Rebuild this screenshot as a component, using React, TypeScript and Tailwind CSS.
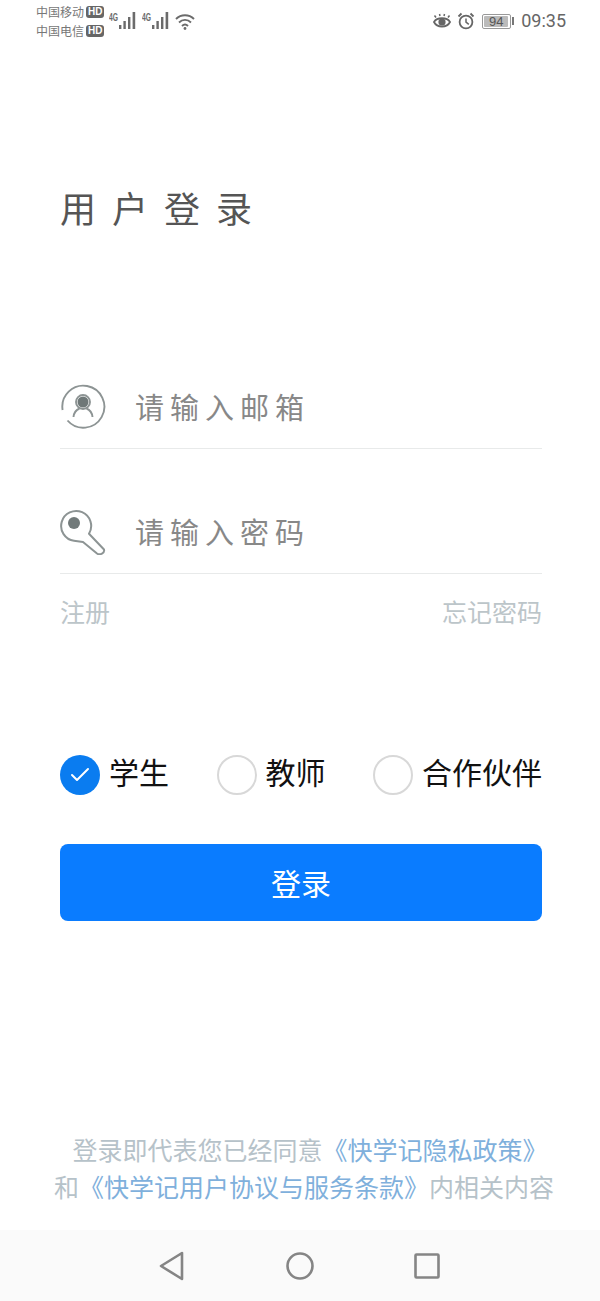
import { Check } from "lucide-react";

const FONT = { fontFamily: '"Noto Sans CJK SC", "Liberation Sans", sans-serif' };

const Signal = () => (
    <svg width="29" height="18" viewBox="0 0 29 18" fill="#6b6b6b">
        <text x="0" y="9" fontSize="10" fontWeight="700" fontFamily="Liberation Sans" textLength="9" lengthAdjust="spacingAndGlyphs">4G</text>
        <rect x="10" y="13" width="2.4" height="4" />
        <rect x="14.4" y="9" width="2.4" height="8" />
        <rect x="19" y="5" width="2.4" height="12" />
        <rect x="23.6" y="0" width="2.6" height="17" />
    </svg>
);

const Carrier = ({ name }: { name: string }) => (
    <div className="flex items-center gap-[2px] h-[19px]">
        <span className="text-[12px] text-[#777] leading-none">{name}</span>
        <span className="bg-[#666] text-white rounded-[3px] text-[10px] font-bold leading-none px-[2px] py-[1px]" style={{ fontFamily: "Liberation Sans" }}>HD</span>
    </div>
);

const StatusBar = () => (
    <div className="flex justify-between items-start pl-[36px] pr-[34px] pt-[2px] h-[40px]">
        <div className="flex items-start">
            <div className="flex flex-col">
                <Carrier name="中国移动" />
                <Carrier name="中国电信" />
            </div>
            <div className="flex gap-[4px] ml-[5px] mt-[10px]">
                <Signal />
                <Signal />
            </div>
            <svg width="20" height="18" viewBox="0 0 20 18" fill="none" stroke="#6b6b6b" strokeWidth="1.9" className="ml-[4px] mt-[11px]">
                <path d="M1 6 C6 1 14 1 19 6" />
                <path d="M4 9.5 C7.5 6 12.5 6 16 9.5" />
                <path d="M7 13 C9 11 11 11 13 13" />
                <circle cx="10" cy="15.5" r="1.4" fill="#6b6b6b" stroke="none" />
            </svg>
        </div>
        <div className="flex items-center mt-[10px] h-[18px]">
            <svg width="20" height="18" viewBox="0 0 20 18" fill="none" stroke="#666" strokeWidth="1.8">
                <path d="M2 10 C5 5 15 5 18 10 C15 16 5 16 2 10 Z" />
                <circle cx="10" cy="10" r="3.6" fill="#666" stroke="none" />
                <path d="M4 5.5 L2.5 3.5 M8 4 L7.5 2 M12 4 L12.5 2 M16 5.5 L17.5 3.5" strokeWidth="1.5" />
            </svg>
            <svg width="18" height="18" viewBox="0 0 18 18" fill="none" stroke="#666" strokeWidth="1.8" className="ml-[5px]">
                <circle cx="9" cy="10" r="6.4" />
                <path d="M9 6.5 V10.2 L11.8 12.4" strokeWidth="1.5" />
                <path d="M1.5 4.5 L4.5 1.5 M13.5 1.5 L16.5 4.5" />
            </svg>
            <div className="flex items-center ml-[7px]">
                <div className="w-[29px] h-[15px] border border-[#999] rounded-[2px] p-[1px]">
                    <div className="w-[24px] h-full bg-[#bbb] rounded-[1px] flex items-center justify-center text-[13px] leading-none text-[#555]" style={{ fontFamily: "Liberation Sans" }}>94</div>
                </div>
                <div className="w-[2px] h-[8px] bg-[#777] ml-[1px]" />
            </div>
            <span className="text-[18px] text-[#666] ml-[7px] leading-none" style={{ fontFamily: "Roboto" }}>09:35</span>
        </div>
    </div>
);

const UserIcon = () => (
    <svg width="46" height="46" viewBox="0 0 46 46" fill="none" stroke="#8d9494" strokeWidth="1.9">
        <path d="M2.6 26 A21 21 0 1 1 7.5 36.5" />
        <circle cx="23" cy="18" r="5.5" fill="#6f7878" stroke="none" />
        <circle cx="23" cy="18" r="7" />
        <path d="M13.5 33 C14 28 17 25.5 19.5 24.5 M32.5 33 C32 28 29 25.5 26.5 24.5" />
    </svg>
);

const KeyIcon = () => (
    <svg width="46" height="46" viewBox="0 0 46 46" fill="none" stroke="#8d9494" strokeWidth="2" strokeLinejoin="round" strokeLinecap="round">
        <path d="M29 24.7 A15 15 0 1 0 14 31.8 L23 33 L37 44.5 C40 46.5 45 44 44 40.5 L29 24.7" />
        <circle cx="14" cy="14" r="6" fill="#727a7a" stroke="none" />
    </svg>
);

const InputRow = ({ icon, text }: { icon: React.ReactNode; text: string }) => (
    <div className="flex items-center h-[78px] border-b border-[#e8eaea]">
        <div className="w-[46px] flex justify-center mb-[5px]">{icon}</div>
        <span className="ml-[29px] mb-[6px] text-[29px] tracking-[6px] leading-none text-[#888]">{text}</span>
    </div>
);

const Radio = ({ label, checked }: { label: string; checked?: boolean }) => (
    <div className="flex items-center gap-[9px]">
        {checked ? (
            <div className="w-[40px] h-[40px] rounded-full bg-[#0a7cf0] flex items-center justify-center">
                <Check size={24} color="#fff" strokeWidth={2} />
            </div>
        ) : (
            <div className="w-[40px] h-[40px] rounded-full border-2 border-[#d8d8d8]" />
        )}
        <span className="text-[30px] leading-none text-[#111] mb-[8px]">{label}</span>
    </div>
);

const App = () => {
    return (
        <div className="w-[600px] h-[1301px] bg-white flex flex-col" style={FONT}>
            <StatusBar />

            <h1 className="mt-[144px] ml-[60px] text-[36px] tracking-[16px] leading-[46px] font-normal text-[#555]">用户登录</h1>

            <div className="ml-[60px] w-[482px] mt-[141px]">
                <InputRow icon={<UserIcon />} text="请输入邮箱" />
                <div className="mt-[47px]">
                    <InputRow icon={<KeyIcon />} text="请输入密码" />
                </div>
                <div className="flex justify-between mt-[25px] text-[25px] leading-none text-[#bcc5c9]">
                    <span>注册</span>
                    <span>忘记密码</span>
                </div>
            </div>

            <div className="ml-[60px] w-[482px] mt-[131px] flex justify-between">
                <Radio label="学生" checked />
                <Radio label="教师" />
                <Radio label="合作伙伴" />
            </div>

            <button className="ml-[60px] w-[482px] mt-[49px] h-[77px] rounded-[8px] bg-[#0a7cff] text-white text-[30px]">登录</button>

            <div className="mt-[210px] text-center text-[25px] leading-[37px] text-[#b6c2c9]">
                <p className="pl-[20px]">登录即代表您已经同意<span className="text-[#7fb0dc]">《快学记隐私政策》</span></p>
                <p className="pl-[8px]">和<span className="text-[#7fb0dc]">《快学记用户协议与服务条款》</span>内相关内容</p>
            </div>

            <div className="mt-auto h-[71px] bg-[#fafafa] flex items-center justify-center">
                <div className="flex items-center gap-[100px] mr-[3px]">
                    <svg width="28" height="30" viewBox="0 0 28 30" fill="none" stroke="#858585" strokeWidth="2.6" strokeLinejoin="round"><path d="M24 2 V28 L3 15 Z" /></svg>
                    <svg width="28" height="28" viewBox="0 0 28 28" fill="none" stroke="#858585" strokeWidth="2.6"><circle cx="14" cy="14" r="12.5" /></svg>
                    <svg width="26" height="26" viewBox="0 0 26 26" fill="none" stroke="#858585" strokeWidth="2.6" strokeLinejoin="round"><rect x="1.5" y="1.5" width="23" height="23" rx="1" /></svg>
                </div>
            </div>
        </div>
    );
};

export default App;
